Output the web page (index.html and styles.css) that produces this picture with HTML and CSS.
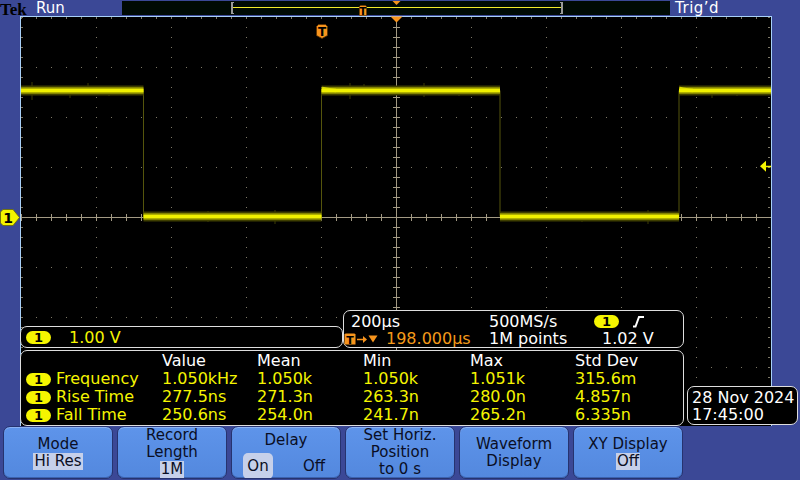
FILE: index.html
```html
<!DOCTYPE html>
<html>
<head>
<meta charset="utf-8">
<link rel="stylesheet" href="styles.css">
</head>
<body>
<div class="page">
  <div class="header">
    <div class="hleft"><span class="logo">Tek</span><span class="state">Run</span></div>
    <div class="recbar">
      <svg width="548" height="14" viewBox="0 0 548 14" class="recsvg">
        <rect x="109" y="1" width="2" height="12" fill="#9a9a9a"/>
        <rect x="111" y="1" width="1" height="1" fill="#9a9a9a"/>
        <rect x="111" y="12" width="1" height="1" fill="#9a9a9a"/>
        <rect x="439" y="1" width="2" height="12" fill="#9a9a9a"/>
        <rect x="438" y="1" width="1" height="1" fill="#9a9a9a"/>
        <rect x="438" y="12" width="1" height="1" fill="#9a9a9a"/>
        <rect x="111" y="6" width="328" height="1" fill="#f2ea2a"/>
        <polygon points="270.5,0 278.5,0 274.5,4" fill="#f7941d"/>
        <g transform="translate(237,4)">
          <polygon points="0.5,1.5 1.5,0.5 6.5,0.5 7.5,1.5 7.5,10.5 0.5,10.5" fill="#f7941d" stroke="#6a3a00" stroke-width="0.6"/>
          <text x="4" y="9.5" class="tglyph" font-size="10">T</text>
        </g>
      </svg>
    </div>
    <div class="trig">Trig’d</div>
  </div>

  <div class="main">
    <div class="lstrip"></div>
    <div class="screen">
      <svg class="grat" width="752" height="410" viewBox="0 0 752 410">
        <g stroke="#7d7866" stroke-width="1" fill="none">
          <path d="M76.5 1V410M151.5 1V410M226.5 1V410M301.5 1V410M451.5 1V410M526.5 1V410M601.5 1V410M676.5 1V410" stroke-dasharray="1 9"/>
          <path d="M1 51.5H751M1 101.5H751M1 151.5H751M1 251.5H751M1 301.5H751M1 351.5H751" stroke-dasharray="1 14"/>
          <path d="M2 1V410M749 1V410" stroke-width="2" stroke-dasharray="1 9"/>
          <path d="M1 2H751" stroke-width="2" stroke-dasharray="1 14"/>
        </g>
        <g stroke="#a39a84" fill="none">
          <path d="M376.5 0V410M1 201.5H751"/>
          <path d="M1 201.5H751" stroke-width="7" stroke-dasharray="1 14"/>
          <path d="M376.5 1V410" stroke-width="7" stroke-dasharray="1 9"/>
        </g>
        <g fill="none">
          <path d="M123.5 74.5V200.5M301.5 74.5V200.5M480 74.5V200.5M659 74.5V200.5" stroke="#55550c" stroke-width="1"/>
          <path d="M12 66V84M50 70V82M68 67V79M89 71V80M188 195V206M232 196V204M255 194V208M330 67V83M344 68V78M404 67V81M439 71V80M562 196V206M628 194V208M692 70V82M717 71V80" stroke="#3c3c04" stroke-width="1"/>
          <path d="M1 74.5H123.5M123.5 200.5H301.5M301.5 74.5H480M480 200.5H659M659 74.5H751" stroke="#3e3e00" stroke-width="10"/>
          <path d="M1 74.5H123.5M123.5 200.5H301.5M301.5 74.5H480M480 200.5H659M659 74.5H751" stroke="#9a9a00" stroke-width="6.5"/>
          <path d="M302 72.5C306 73 309 74 316 74.5M659.5 72.5C663 73 666 74 673 74.5" stroke="#d8d800" stroke-width="3.5"/>
          <path d="M1 74.5H123.5M123.5 200.5H301.5M301.5 74.5H480M480 200.5H659M659 74.5H751" stroke="#f0f000" stroke-width="3.5"/>
        </g>
        <path d="M0 0.5H752M0.5 0V410M751.5 0V410" stroke="#a8d0f8" stroke-width="1"/>
        <polygon points="370.5,0.5 382.5,0.5 376.5,6.5" fill="#f7941d"/>
        <g transform="translate(296,8)">
          <polygon points="0.5,2.5 2.5,0.5 9.5,0.5 11.5,2.5 11.5,11.5 6,14.5 0.5,11.5" fill="#f7941d" stroke="#5a3000" stroke-width="0.8"/>
          <text x="6" y="11.5" class="tglyph" font-size="12">T</text>
        </g>
        <polygon points="740,150.2 746,144.7 746,155.7" fill="#f4f400"/>
        <path d="M746 150.5H751" stroke="#f4f400" stroke-width="1.5"/>
      </svg>
    </div>
    <div class="rstrip"></div>

    <svg class="chmark" width="20" height="17" viewBox="0 0 20 17">
      <polygon points="0.5,3 3,0.5 13,0.5 19.5,8.5 13,16.5 3,16.5 0.5,14" fill="#f4f400" stroke="#6a6a00" stroke-width="0.8"/>
      <text x="8" y="14" class="oneglyph">1</text>
    </svg>

    <div class="readouts">
      <div class="rowa">
        <div class="box vbox"><span class="pill">1</span><span class="yel vval">1.00 V</span></div>
        <div class="box tbox">
          <span class="wht c1">200µs</span>
          <span class="wht">500MS/s</span>
          <span class="c3"><span class="pill">1</span>
            <svg class="slope" width="12" height="12" viewBox="0 0 12 12"><polyline points="0,10.5 2.5,10.5 6,1 11,1" fill="none" stroke="#fff" stroke-width="2"/></svg>
          </span>
          <span class="org c1b">
            <svg class="tarrow" width="40" height="12" viewBox="0 0 40 12">
              <polygon points="0.5,1.5 1.5,0.5 10.5,0.5 11.5,1.5 11.5,11.5 0.5,11.5" fill="#f7941d"/>
              <text x="6" y="10.5" class="tglyph" font-size="11">T</text>
              <path d="M13 6.5H20" stroke="#f7941d" stroke-width="1.5"/>
              <polygon points="19,3 23,6.5 19,10" fill="#f7941d"/>
              <polygon points="24.5,2.5 33.5,2.5 29,9.5" fill="#f7941d"/>
            </svg>198.000µs</span>
          <span class="wht">1M points</span>
          <span class="wht c3v">1.02 V</span>
        </div>
      </div>
      <div class="rowb">
        <div class="box mbox">
          <span></span><span></span>
          <span class="wht">Value</span><span class="wht">Mean</span><span class="wht">Min</span><span class="wht">Max</span><span class="wht">Std Dev</span>

          <span class="pcell"><span class="pill">1</span></span><span class="yel">Frequency</span>
          <span class="yel">1.050kHz</span><span class="yel">1.050k</span><span class="yel">1.050k</span><span class="yel">1.051k</span><span class="yel">315.6m</span>

          <span class="pcell"><span class="pill">1</span></span><span class="yel">Rise Time</span>
          <span class="yel">277.5ns</span><span class="yel">271.3n</span><span class="yel">263.3n</span><span class="yel">280.0n</span><span class="yel">4.857n</span>

          <span class="pcell"><span class="pill">1</span></span><span class="yel">Fall Time</span>
          <span class="yel">250.6ns</span><span class="yel">254.0n</span><span class="yel">241.7n</span><span class="yel">265.2n</span><span class="yel">6.335n</span>
        </div>
        <div class="box dbox">
          <div>28 Nov 2024</div>
          <div>17:45:00</div>
        </div>
      </div>
    </div>
  </div>

  <div class="softkeys">
    <div class="key"><span>Mode</span><span class="hl">Hi Res</span></div>
    <div class="key"><span>Record</span><span>Length</span><span class="hl">1M</span></div>
    <div class="key key-top"><span>Delay</span>
      <div class="onoff"><span class="sel">On</span><span class="off">Off</span></div>
    </div>
    <div class="key"><span>Set Horiz.</span><span>Position</span><span>to 0 s</span></div>
    <div class="key"><span>Waveform</span><span>Display</span></div>
    <div class="key"><span>XY Display</span><span class="hl">Off</span></div>
  </div>
</div>
</body>
</html>
```

FILE: styles.css
```css
html, body {
  margin: 0;
  padding: 0;
}

body {
  width: 800px;
  height: 480px;
  overflow: hidden;
  background: #3b4896;
  font-family: "DejaVu Sans", "Liberation Sans", sans-serif;
}

.page {
  display: flex;
  flex-direction: column;
  width: 800px;
  height: 480px;
}

/* header */
.header {
  height: 16px;
  display: grid;
  grid-template-columns: 122px 548px 1fr;
}

.hleft {
  display: flex;
  align-items: flex-start;
}

.logo {
  font-family: "Liberation Serif", serif;
  font-weight: bold;
  font-size: 17px;
  line-height: 16px;
  padding-top: 1.5px;
  color: #000;
  width: 29px;
}

.state {
  margin-left: 7px;
  font-size: 15px;
  line-height: 16px;
  color: #fff;
}

.recbar {
  margin-top: 1px;
  height: 14px;
  background: #000a04;
}

.recsvg {
  display: block;
  overflow: visible;
}

.trig {
  padding-left: 5px;
  font-size: 15px;
  line-height: 16px;
  letter-spacing: 0.5px;
  color: #fff;
}

.tglyph {
  font-family: "DejaVu Sans", sans-serif;
  font-weight: bold;
  fill: #000;
  text-anchor: middle;
}

.oneglyph {
  font-family: "DejaVu Sans", sans-serif;
  font-weight: bold;
  font-size: 14px;
  fill: #000;
  text-anchor: middle;
}

/* main screen */
.main {
  position: relative;
  height: 410px;
  display: flex;
}

.lstrip {
  width: 20px;
}

.screen {
  width: 752px;
  height: 410px;
  background: #000;
}

.grat {
  display: block;
}

.rstrip {
  flex: 1;
}

.chmark {
  position: absolute;
  left: 0;
  top: 193px;
}

/* readouts */
.readouts {
  position: absolute;
  left: 20px;
  top: 294px;
  width: 778px;
  display: flex;
  flex-direction: column;
  font-size: 16px;
  line-height: 17px;
}

.rowa {
  display: flex;
  align-items: flex-end;
  height: 38px;
}

.rowb {
  display: flex;
  align-items: flex-end;
  gap: 3px;
  margin-top: 2px;
}

.box {
  box-sizing: border-box;
  background: #000;
  border: 1px solid #dedede;
  border-radius: 7px;
}

.wht { color: #fff; }
.yel { color: #f5f500; }
.org { color: #f49a1a; }

.pill {
  display: inline-block;
  width: 25px;
  height: 13px;
  border-radius: 7px;
  background: #f5f500;
  color: #000;
  font-size: 13px;
  line-height: 13px;
  text-align: center;
  font-weight: bold;
  vertical-align: top;
}

.vbox {
  width: 323px;
  height: 22px;
  display: flex;
  align-items: center;
  padding-left: 5px;
}

.vval {
  margin-left: 18px;
}

.tbox {
  width: 341px;
  height: 38px;
  padding-top: 2px;
  display: grid;
  grid-template-columns: 145px 105px 1fr;
  grid-auto-rows: 17px;
}

.c1 {
  padding-left: 7px;
}

.c1b {
  display: flex;
  align-items: center;
}

.tarrow {
  display: block;
  margin-right: 2px;
}

.c3 {
  display: flex;
  align-items: center;
}

.slope {
  display: block;
  margin-left: 14px;
}

.c3v {
  padding-left: 8px;
}

.mbox {
  width: 664px;
  height: 76px;
  padding: 1px 0 0 5px;
  display: grid;
  grid-template-columns: 30px 106px 95px 106px 107px 105px 1fr;
  grid-auto-rows: 18px;
  line-height: 18px;
}

.pcell {
  display: flex;
  align-items: center;
}

.dbox {
  width: 111px;
  height: 39px;
  padding: 2px 0 0 4px;
  color: #fff;
  margin-bottom: 1px;
}

/* softkeys */
.softkeys {
  height: 54px;
  display: flex;
  gap: 4px;
  padding-left: 3px;
}

.key {
  box-sizing: border-box;
  width: 110px;
  height: 53px;
  border: 1px solid #26336f;
  border-radius: 7px;
  background: linear-gradient(#5e94ea, #5388de);
  box-shadow: inset 0 1px 0 #8cb2f4, inset 0 -1px 0 #3c62b0;
  display: flex;
  flex-direction: column;
  align-items: center;
  justify-content: center;
  font-size: 15px;
  line-height: 17px;
  color: #0a0e24;
  overflow: hidden;
}

.hl {
  background: #c6d0ea;
  padding: 0 1px;
}

.key-top {
  justify-content: flex-start;
  padding-top: 5px;
}

.onoff {
  display: flex;
  align-self: stretch;
  align-items: center;
  margin-top: 4px;
  padding-left: 11px;
}

.sel {
  background: #c6d0ea;
  border-radius: 5px;
  width: 30px;
  height: 26px;
  line-height: 26px;
  text-align: center;
}

.off {
  margin-left: 30px;
}
```
